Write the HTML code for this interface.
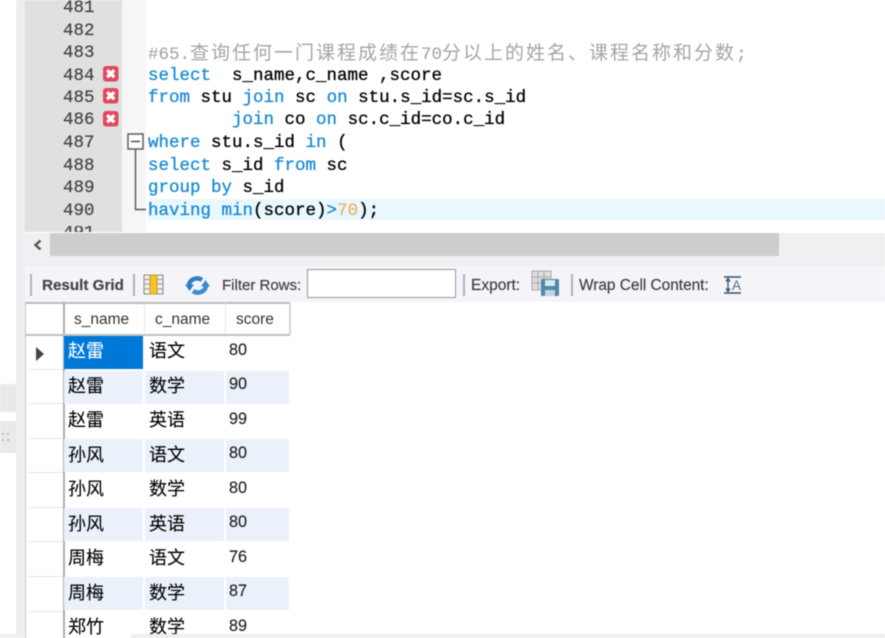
<!DOCTYPE html>
<html><head><meta charset="utf-8"><style>
html,body{margin:0;padding:0;background:#fff;width:885px;height:638px;overflow:hidden}
#w{position:relative;width:885px;height:638px;overflow:hidden;filter:blur(.45px)}
#w div,#w svg{position:absolute}
.ln{left:63px;width:32px;margin-top:1px;font:17.5px/22px "Liberation Mono",monospace;color:#444;white-space:pre;-webkit-text-stroke:.2px #444}
.c{left:148px;height:22px;margin-top:1px;font:17.5px/22px "Liberation Mono","Noto Sans CJK SC",monospace;color:#000;white-space:pre;-webkit-text-stroke:.3px}
.k{color:#1a8ad0}.n{color:#e8b56a}
.cm{color:#a5a5a5;font-family:"Liberation Mono",monospace;-webkit-text-stroke:.1px #a5a5a5}
.cj{font:19px/22px "Noto Sans CJK SC",sans-serif;letter-spacing:2px;color:#a5a5a5;-webkit-text-stroke:0}
.t{font:15px/20px "Liberation Sans",sans-serif;color:#3c3c3c;white-space:pre;margin-top:1px;-webkit-text-stroke:.15px #3c3c3c}
.v{background:#a9b4c2;width:1.5px;height:22px;top:274px}
.g{font:18px/24px "Noto Sans CJK SC",sans-serif;color:#000;white-space:pre;margin-top:1px;-webkit-text-stroke:.1px}
.d{font:16.2px/24px "Liberation Sans",sans-serif;color:#222;margin-top:1px;-webkit-text-stroke:.15px #222}
.h{font:15.5px/20px "Liberation Sans",sans-serif;color:#333;top:310px}
.r{left:27px;width:36px;height:1px;background:#e6e6e6}
.a{background:#eaf1fb;height:33px}
</style></head><body><div id="w">
<div style="left:16px;top:0;width:9px;height:638px;background:#eeeef2"></div>
<div style="left:0;top:384px;width:16px;height:28px;background:#e9e9e9"></div>
<div style="left:0;top:421px;width:16px;height:32px;background:#e9e9e9"></div>
<div style="left:2px;top:433px;width:2px;height:2px;background:#bbb"></div>
<div style="left:7px;top:433px;width:2px;height:2px;background:#bbb"></div>
<div style="left:2px;top:439px;width:2px;height:2px;background:#bbb"></div>
<div style="left:7px;top:439px;width:2px;height:2px;background:#bbb"></div>

<div style="left:25px;top:0;width:97px;height:232px;background:#e0e0e0;overflow:hidden"></div>
<div style="left:122px;top:0;width:24px;height:232px;background:#f6f6f6"></div>
<div style="left:148px;top:199px;width:737px;height:21px;background:#e9f8ff"></div>

<div class="ln" style="top:-4px">481</div>
<div class="ln" style="top:19px">482</div>
<div class="ln" style="top:41px">483</div>
<div class="ln" style="top:64px">484</div>
<div class="ln" style="top:86px">485</div>
<div class="ln" style="top:108px">486</div>
<div class="ln" style="top:131px">487</div>
<div class="ln" style="top:154px">488</div>
<div class="ln" style="top:176px">489</div>
<div class="ln" style="top:199px">490</div>
<div style="left:25px;top:226px;width:97px;height:6px;overflow:hidden"><div class="ln" style="left:38px;top:-5px">491</div></div>

<svg style="left:103px;top:66px" width="16" height="16" viewBox="0 0 16 16"><rect x="0" y="0" width="15.500" height="15.500" rx="3" fill="#df4a5c"/><path d="M4.200 4.200l7 7M11.200 4.200l-7 7" stroke="#fff" stroke-width="3.400"/></svg>
<svg style="left:103px;top:88px" width="16" height="16" viewBox="0 0 16 16"><rect x="0" y="0" width="15.500" height="15.500" rx="3" fill="#df4a5c"/><path d="M4.200 4.200l7 7M11.200 4.200l-7 7" stroke="#fff" stroke-width="3.400"/></svg>
<svg style="left:103px;top:111px" width="16" height="16" viewBox="0 0 16 16"><rect x="0" y="0" width="15.500" height="15.500" rx="3" fill="#df4a5c"/><path d="M4.200 4.200l7 7M11.200 4.200l-7 7" stroke="#fff" stroke-width="3.400"/></svg>

<svg style="left:127px;top:133px" width="22" height="80" viewBox="0 0 22 80"><rect x="1" y="1" width="15" height="15" fill="#fff" stroke="#555" stroke-width="1.400"/><path d="M4 8.500h9" stroke="#444" stroke-width="1.400"/><path d="M8.500 16V76.500H19" fill="none" stroke="#555" stroke-width="1.400"/></svg>

<div class="c" style="top:40px"><span class="cm">#65.</span><span class="cj">查询任何一门课程成绩在</span><span class="cm">70</span><span class="cj">分以上的姓名、课程名称和分数</span><span class="cm">;</span></div>
<div class="c" style="top:64px"><span class="k">select</span>  s_name,c_name ,score</div>
<div class="c" style="top:86px"><span class="k">from</span> stu <span class="k">join</span> sc <span class="k">on</span> stu.s_id=sc.s_id</div>
<div class="c" style="top:108px">        <span class="k">join</span> co <span class="k">on</span> sc.c_id=co.c_id</div>
<div class="c" style="top:131px"><span class="k">where</span> stu.s_id <span class="k">in</span> (</div>
<div class="c" style="top:154px"><span class="k">select</span> s_id <span class="k">from</span> sc</div>
<div class="c" style="top:176px"><span class="k">group by</span> s_id</div>
<div class="c" style="top:199px"><span class="k">having min</span>(score)<span class="k">&gt;</span><span class="n">70</span>);</div>

<div style="left:25px;top:233px;width:860px;height:23px;background:#f0f0f0"></div>
<div style="left:50px;top:233px;width:729px;height:23px;background:#cdcdcd"></div>
<svg style="left:32px;top:239px" width="12" height="12" viewBox="0 0 12 12"><path d="M8.500 1.500L3.500 6l5 4.500" fill="none" stroke="#555" stroke-width="2.400"/></svg>

<div style="left:25px;top:256px;width:860px;height:10px;background:#f0f0f2"></div>
<div style="left:25px;top:266px;width:860px;height:36px;background:#f5f5f9"></div>
<div class="v" style="left:30px"></div>
<div class="v" style="left:133px"></div>
<div class="v" style="left:463px"></div>
<div class="v" style="left:571px"></div>
<div class="t" style="left:42px;top:275px;font-weight:bold;color:#444;font-size:15.2px">Result Grid</div>
<svg style="left:143px;top:274px" width="22" height="21" viewBox="0 0 22 21"><rect x="1" y="1" width="19" height="19" fill="#eee" stroke="#888"/><rect x="7" y="1" width="7" height="19" fill="#f6c32c" stroke="#c79a1a"/><path d="M1 5.500h6M14 5.500h6M1 10h6M14 10h6M1 15h6M14 15h6" stroke="#999"/></svg>
<svg style="left:185px;top:275px" width="26" height="21" viewBox="0 0 26 21"><path d="M4 10.500A8 7 0 0 1 17 5" fill="none" stroke="#2f7fc4" stroke-width="4.500"/><path d="M21 10.500A8 7 0 0 1 8 16" fill="none" stroke="#3a8bd0" stroke-width="4.500"/><path d="M0 9.500h9L4.500 16z" fill="#2f7fc4"/><path d="M25 11.500h-9L20.500 5z" fill="#3a8bd0"/></svg>
<div class="t" style="left:222px;top:275px">Filter Rows:</div>
<div style="left:307px;top:269px;width:147px;height:27px;border:1.500px solid #999;background:#fff"></div>
<div class="t" style="left:471px;top:275px;font-size:15.5px">Export:</div>
<svg style="left:531px;top:270px" width="30" height="28" viewBox="0 0 30 28"><rect x="1" y="1" width="19" height="19" fill="#ddd" stroke="#aaa"/><path d="M1 7h19M1 13h19M7 1v19M13 1v19" stroke="#aaa"/><rect x="10" y="9" width="18" height="17" rx="1" fill="#4f87ad"/><rect x="14" y="10" width="10" height="6" fill="#dbe6ee"/><rect x="14" y="20" width="10" height="6" fill="#c4d4df"/></svg>
<div class="t" style="left:579px;top:275px;font-size:15.4px">Wrap Cell Content:</div>
<svg style="left:723px;top:275px" width="20" height="20" viewBox="0 0 20 20"><path d="M1 2h17M1 18h17" stroke="#34506c" stroke-width="1.600"/><path d="M5 4v12M3 6.500l2-3 2 3M3 13.500l2 3 2-3" fill="none" stroke="#34506c" stroke-width="1.300"/></svg>
<div class="t" style="left:732px;top:277px;font-size:13.500px;line-height:15px;color:#55697f;-webkit-text-stroke:0">A</div>

<div style="left:25px;top:302px;width:265px;height:1.500px;background:#bbb"></div>
<div style="left:25px;top:302px;width:1px;height:336px;background:#ccc"></div>
<div style="left:63px;top:302px;width:1.500px;height:336px;background:#b0b0b0"></div>
<div style="left:25px;top:334px;width:265px;height:1.500px;background:#c0c0c0"></div>
<div style="left:144px;top:303px;width:1px;height:31px;background:#e8e8e8"></div>
<div style="left:225px;top:303px;width:1px;height:31px;background:#e8e8e8"></div>
<div style="left:289px;top:303px;width:1.500px;height:32px;background:#d6d6d6"></div>
<div class="h" style="left:74px">s_name</div>
<div class="h" style="left:155px">c_name</div>
<div class="h" style="left:236px">score</div>

<div class="r" style="top:369px"></div><div class="r" style="top:403px"></div><div class="r" style="top:438px"></div><div class="r" style="top:472px"></div><div class="r" style="top:507px"></div><div class="r" style="top:541px"></div><div class="r" style="top:576px"></div><div class="r" style="top:611px"></div>
<svg style="left:35px;top:347px" width="10" height="14" viewBox="0 0 10 14"><path d="M1 0l8 7-8 7z" fill="#444"/></svg>

<div style="left:64px;top:336px;width:79px;height:33px;background:#0078d7"></div>
<div class="a" style="left:64px;top:371px;width:79px"></div><div class="a" style="left:145px;top:371px;width:79px"></div><div class="a" style="left:226px;top:371px;width:63px"></div>
<div class="a" style="left:64px;top:439px;width:79px"></div><div class="a" style="left:145px;top:439px;width:79px"></div><div class="a" style="left:226px;top:439px;width:63px"></div>
<div class="a" style="left:64px;top:508px;width:79px"></div><div class="a" style="left:145px;top:508px;width:79px"></div><div class="a" style="left:226px;top:508px;width:63px"></div>
<div class="a" style="left:64px;top:577px;width:79px"></div><div class="a" style="left:145px;top:577px;width:79px"></div><div class="a" style="left:226px;top:577px;width:63px"></div>

<div class="g" style="left:68px;top:337px;color:#fff">赵雷</div><div class="g" style="left:149px;top:337px">语文</div><div class="d" style="left:229px;top:337px">80</div>
<div class="g" style="left:68px;top:372px">赵雷</div><div class="g" style="left:149px;top:372px">数学</div><div class="d" style="left:229px;top:371px">90</div>
<div class="g" style="left:68px;top:406px">赵雷</div><div class="g" style="left:149px;top:406px">英语</div><div class="d" style="left:229px;top:406px">99</div>
<div class="g" style="left:68px;top:441px">孙风</div><div class="g" style="left:149px;top:441px">语文</div><div class="d" style="left:229px;top:440px">80</div>
<div class="g" style="left:68px;top:475px">孙风</div><div class="g" style="left:149px;top:475px">数学</div><div class="d" style="left:229px;top:475px">80</div>
<div class="g" style="left:68px;top:510px">孙风</div><div class="g" style="left:149px;top:510px">英语</div><div class="d" style="left:229px;top:509px">80</div>
<div class="g" style="left:68px;top:544px">周梅</div><div class="g" style="left:149px;top:544px">语文</div><div class="d" style="left:229px;top:544px">76</div>
<div class="g" style="left:68px;top:579px">周梅</div><div class="g" style="left:149px;top:579px">数学</div><div class="d" style="left:229px;top:578px">87</div>
<div class="g" style="left:68px;top:613px">郑竹</div><div class="g" style="left:149px;top:613px">数学</div><div class="d" style="left:229px;top:613px">89</div>

<div style="left:131px;top:634px;width:754px;height:4px;background:#efefef"></div>
<div style="left:0;top:634px;width:16px;height:4px;background:#f0f0f0"></div>
</div></body></html>
